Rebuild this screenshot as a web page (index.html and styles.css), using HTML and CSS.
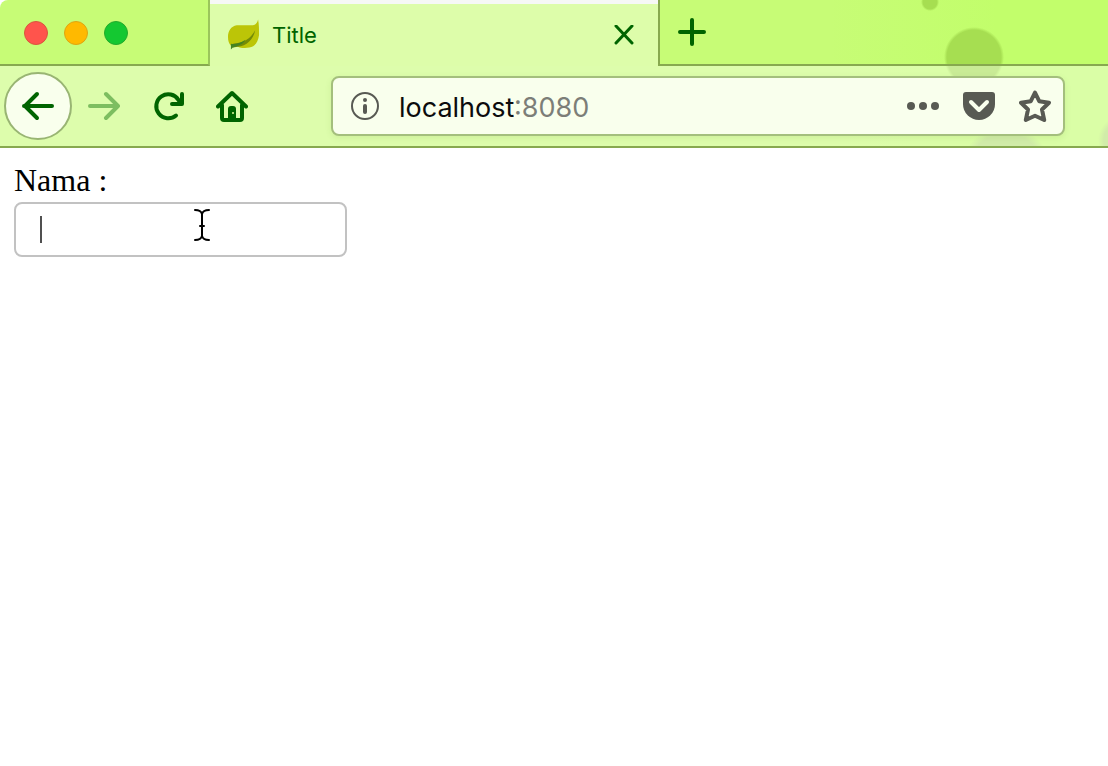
FILE: index.html
```html
<!DOCTYPE html>
<html lang="id">
<head>
<meta charset="utf-8">
<meta name="viewport" content="width=device-width, initial-scale=1">
<title>Title</title>
<link rel="stylesheet" href="styles.css">
</head>
<body>
<header class="chrome">
  <div class="tab-strip">
    <div class="window-controls">
      <button class="light light-close" aria-label="Close window"></button>
      <button class="light light-minimize" aria-label="Minimize window"></button>
      <button class="light light-zoom" aria-label="Zoom window"></button>
    </div>
    <div class="tab">
      <svg class="favicon" viewBox="0 0 34 32" aria-hidden="true">
        <path fill="#bcc507" d="M31 0c-1 4-3 6-7 6H9C3 7 0 12 0 18c0 4 1 7 3 9h5c3 2 8 3 14 2 6-1 9-6 10-13 0-6 0-11-1-16z"/>
        <path fill="#748b08" d="M5 25c11-1 18-5 23-14-2 10-9 16-18 17l-5 1z"/>
        <path fill="#438322" d="M3 25c6 1 10-1 15-4-2 4-6 6-13 8l-2 2z"/>
      </svg>
      <span class="tab-title">Title</span>
      <button class="icon-button tab-close" aria-label="Close tab">
        <svg width="20" height="20" viewBox="0 0 20 20"><path d="M2 1l16 17M18 1L2 18"/></svg>
      </button>
    </div>
    <div class="strip-rest">
      <button class="icon-button new-tab" aria-label="New tab">
        <svg width="28" height="28" viewBox="0 0 28 28"><path d="M14 2v24M2 14h24"/></svg>
      </button>
    </div>
  </div>
  <nav class="toolbar">
    <button class="icon-button back" aria-label="Back">
      <svg width="34" height="32" viewBox="0 0 34 32"><path d="M31 16H3M16 4L4 16l12 12"/></svg>
    </button>
    <div class="nav-buttons">
      <button class="icon-button forward" aria-label="Forward" disabled>
        <svg width="32" height="32" viewBox="0 0 32 32"><path d="M2 16h28M18 4l12 12-12 12"/></svg>
      </button>
      <button class="icon-button" aria-label="Reload">
        <svg width="32" height="32" viewBox="0 0 32 32"><path d="M24 25.500A12 12 0 1 1 26.500 10"/><path d="M30 4v10H20"/><path fill="currentColor" stroke="none" d="M30 8v6h-8z"/></svg>
      </button>
      <button class="icon-button" aria-label="Home">
        <svg width="32" height="32" viewBox="0 0 32 32"><path d="M2 16.500L16 3l14 13.500M6 15v13q0 2 2 2h16q2 0 2-2V15"/><path class="solid" d="M12 30V19q0-3 3-3h2q3 0 3 3v11z"/><path fill="#a9d477" stroke="none" d="M16 22h2v2h-2z"/></svg>
      </button>
    </div>
    <form class="address-bar">
      <svg class="info" width="28" height="28" viewBox="0 0 28 28" aria-hidden="true"><circle cx="14" cy="14" r="13"/><path d="M14 14v6"/><circle class="dot" cx="14" cy="8" r="2"/></svg>
      <label class="address">
        <input class="host" type="text" value="localhost" aria-label="Address" spellcheck="false"><span class="port">:8080</span>
      </label>
      <div class="page-actions">
        <button type="button" class="icon-button" aria-label="Page actions">
          <svg width="32" height="32" viewBox="0 0 32 32"><g class="solid"><circle cx="4" cy="16" r="4"/><circle cx="16" cy="16" r="4"/><circle cx="28" cy="16" r="4"/></g></svg>
        </button>
        <button type="button" class="icon-button" aria-label="Save to Pocket">
          <svg width="32" height="32" viewBox="0 0 32 32"><path class="solid" d="M3 2h26q3 0 3 3v9a16 16 0 0 1-32 0V5q0-3 3-3z"/><path stroke="#f9ffed" d="M8 12l8 8 8-8"/></svg>
        </button>
        <button type="button" class="icon-button" aria-label="Bookmark this page">
          <svg width="32" height="32" viewBox="0 0 32 32"><path d="M16 2.500l4.200 8.700 9.800 1.500-7 6.800 2.200 10.500L16 25.800 6.800 30 9 19.500l-7-6.800 9.800-1.500z"/></svg>
        </button>
      </div>
    </form>
  </nav>
</header>
<main class="page">
  <label class="name-label" for="name">Nama :</label>
  <div class="field">
    <input class="name-input" id="name" type="text">
    <span class="caret"></span>
    <svg class="pointer" width="16" height="34" viewBox="0 0 16 34" aria-hidden="true"><path d="M1 2q6 0 7 4 1-4 7-4M8 6v22M1 32q6 0 7-4 1 4 7 4M6 18h4"/></svg>
  </div>
</main>
</body>
</html>
```
FILE: styles.css
```css
* {
  box-sizing: border-box;
}

body {
  margin: 0;
  background: #fff;
  font-family: Inter, Roboto, sans-serif;
}

button,
input {
  margin: 0;
  padding: 0;
  border: 0;
  background: none;
  font: inherit;
  color: inherit;
}

svg {
  display: block;
  flex: none;
  fill: none;
  stroke: currentColor;
  stroke-width: 4;
  stroke-linecap: round;
  stroke-linejoin: round;
}

.solid {
  fill: currentColor;
  stroke: none;
}

.chrome {
  color: #006400;
  border-top-left-radius: 8px;
  background:
    radial-gradient(circle at calc(100% - 134px) 57px, #a6de51 27px, transparent 30px),
    radial-gradient(circle at calc(100% - 178px) 2px, #a6de51 7px, transparent 9px),
    radial-gradient(circle at calc(100% - 102px) 172px, #b2df70 38px, transparent 46px),
    radial-gradient(circle at calc(100% + 14px) 140px, #b2df70 18px, transparent 24px),
    linear-gradient(90deg, #c7fc76 75%, #c2fe6b 90%);
}

.tab-strip {
  display: flex;
  height: 66px;
}

.window-controls {
  display: flex;
  align-items: center;
  gap: 16px;
  width: 210px;
  padding: 2px 0 0 24px;
  border-right: 2px solid #9bc65b;
  border-bottom: 2px solid #87a94f;
}

.light {
  width: 24px;
  height: 24px;
  border: 1px solid;
  border-radius: 50%;
}

.light-close {
  background: #ff544c;
  border-color: #d8573d;
}

.light-minimize {
  background: #ffb900;
  border-color: #dda513;
}

.light-zoom {
  background: #14c831;
  border-color: #23aa2b;
}

.tab {
  display: flex;
  align-items: center;
  flex: 0 1 448px;
  padding: 0 24px 0 18px;
  border-top: 4px solid #f6f8f5;
  background: #ddfdaa;
}

.favicon {
  width: 33px;
  height: 32px;
  margin-right: 11px;
  stroke: none;
}

.tab-title {
  flex: 1;
  font-size: 22px;
}

.icon-button {
  display: flex;
  align-items: center;
  justify-content: center;
  flex: none;
}

.tab-close svg {
  stroke-width: 3;
}

.strip-rest {
  display: flex;
  flex: 1;
  align-items: center;
  padding-left: 18px;
  border-left: 2px solid #87a94f;
  border-bottom: 2px solid #87a94f;
}

.toolbar {
  display: flex;
  align-items: center;
  height: 82px;
  padding: 0 43px 0 4px;
  border-bottom: 2px solid #87a94f;
  background: rgba(255, 255, 255, 0.4);
}

.back {
  width: 68px;
  height: 68px;
  border: 2px solid #99b573;
  border-radius: 50%;
  background: #f9ffed;
}

.nav-buttons {
  display: flex;
  gap: 32px;
  margin: 0 83px 0 16px;
}

.forward {
  color: #7dbe60;
}

.address-bar {
  display: flex;
  align-items: center;
  flex: 1;
  min-width: 0;
  height: 60px;
  padding: 0 12px 0 18px;
  border: 2px solid #a4bf7d;
  border-radius: 8px;
  background: #f9ffed;
  box-shadow: 0 2px 6px rgba(80, 130, 0, 0.1);
  color: #585a53;
}

.info {
  margin-right: 20px;
  stroke-width: 2;
}

.info path {
  stroke-width: 4;
}

.info .dot {
  fill: currentColor;
  stroke: none;
}

.address {
  display: flex;
  align-items: center;
  flex: 1;
  min-width: 0;
  padding-top: 2px;
  font-size: 27px;
}

.host {
  width: 115px;
  field-sizing: content;
  color: #0c0c0d;
  outline: 0;
}

.port {
  color: #7c7e78;
}

.page-actions {
  display: flex;
  gap: 24px;
}

.page {
  padding: 13px 14px;
  font-family: "Liberation Serif", serif;
  font-size: 32px;
  line-height: 38px;
}

.name-label {
  display: block;
  margin-bottom: 3px;
}

.field {
  position: relative;
  width: 333px;
  max-width: 100%;
}

.name-input {
  display: block;
  width: 100%;
  height: 55px;
  padding: 0 24px;
  border: 2px solid #c2c2c2;
  border-radius: 8px;
  outline: 0;
}

.caret {
  position: absolute;
  top: 14px;
  left: 26px;
  width: 2px;
  height: 27px;
  background: #505050;
}

.pointer {
  position: absolute;
  top: 6px;
  left: 180px;
  stroke: #000;
  stroke-width: 2;
}
```
